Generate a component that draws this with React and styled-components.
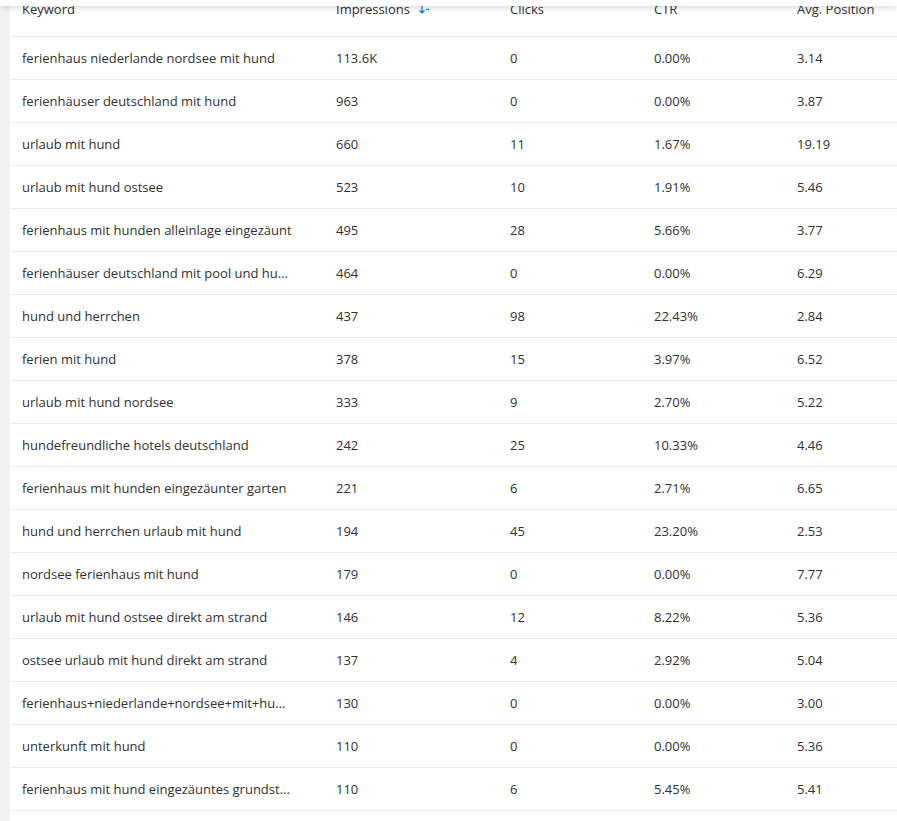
import React from 'react';
import styled, { createGlobalStyle } from 'styled-components';

const GlobalStyle = createGlobalStyle`
  html, body {
    margin: 0;
    padding: 0;
    background: #f3f2f1;
    overflow: hidden;
  }
  body {
    font-family: 'Open Sans', 'Noto Sans', sans-serif;
    color: #323130;
  }
`;

// keywords as the list shows them (long ones already cut by the table)
const rows = [
  ['ferienhaus niederlande nordsee mit hund', '113.6K', '0', '0.00%', '3.14'],
  ['ferienhäuser deutschland mit hund', '963', '0', '0.00%', '3.87'],
  ['urlaub mit hund', '660', '11', '1.67%', '19.19'],
  ['urlaub mit hund ostsee', '523', '10', '1.91%', '5.46'],
  ['ferienhaus mit hunden alleinlage eingezäunt', '495', '28', '5.66%', '3.77'],
  ['ferienhäuser deutschland mit pool und hu...', '464', '0', '0.00%', '6.29'],
  ['hund und herrchen', '437', '98', '22.43%', '2.84'],
  ['ferien mit hund', '378', '15', '3.97%', '6.52'],
  ['urlaub mit hund nordsee', '333', '9', '2.70%', '5.22'],
  ['hundefreundliche hotels deutschland', '242', '25', '10.33%', '4.46'],
  ['ferienhaus mit hunden eingezäunter garten', '221', '6', '2.71%', '6.65'],
  ['hund und herrchen urlaub mit hund', '194', '45', '23.20%', '2.53'],
  ['nordsee ferienhaus mit hund', '179', '0', '0.00%', '7.77'],
  ['urlaub mit hund ostsee direkt am strand', '146', '12', '8.22%', '5.36'],
  ['ostsee urlaub mit hund direkt am strand', '137', '4', '2.92%', '5.04'],
  ['ferienhaus+niederlande+nordsee+mit+hu...', '130', '0', '0.00%', '3.00'],
  ['unterkunft mit hund', '110', '0', '0.00%', '5.36'],
  ['ferienhaus mit hund eingezäuntes grundst...', '110', '6', '5.45%', '5.41'],
];

const TopBar = styled.div`
  position: fixed;
  top: 0;
  left: 0;
  right: 0;
  height: 6px;
  background: #ffffff;
  box-shadow: 0 1px 6px rgba(0, 0, 0, 0.18);
  z-index: 2;
`;

const Page = styled.div`
  padding-left: 10px;
  margin-top: -19px;
`;

const Card = styled.div`
  background: #ffffff;
  width: 887px;
  min-height: calc(100vh + 19px);
  overflow: hidden;
`;

const Grid = styled.div`
  display: grid;
  grid-template-columns: 314px 174px 144px 143px 1fr;
`;

const HeaderCell = styled.div`
  height: 55px;
  display: flex;
  align-items: center;
  padding-left: 12px;
  font-size: 13px;
  color: #323130;
  border-bottom: 1px solid #edebe9;
  white-space: nowrap;
`;

const Cell = styled.div`
  height: 42px;
  display: flex;
  align-items: center;
  padding-left: 12px;
  padding-right: ${(p) => (p.$wide ? '12px' : '8px')};
  font-size: 13px;
  color: #323130;
  border-bottom: 1px solid #edebe9;
  min-width: 0;
`;

const CellText = styled.span`
  white-space: nowrap;
  overflow: hidden;
  text-overflow: ellipsis;
`;

const SortIcon = styled.svg`
  margin-left: 8px;
  flex: none;
`;

const SortDown = () => (
  <SortIcon width="12" height="12" viewBox="0 0 12 12">
    <path d="M4 1v9M1.5 7.5 4 10l2.5-2.5" fill="none" stroke="#0078d4" strokeWidth="1.2" />
    <path d="M8 6.5h3" stroke="#0078d4" strokeWidth="1.2" />
  </SortIcon>
);

const headers = ['Keyword', 'Impressions', 'Clicks', 'CTR', 'Avg. Position'];

const App = () => (
  <>
    <GlobalStyle />
    <TopBar />
    <Page>
      <Card>
        <Grid>
          {headers.map((h, i) => (
            <HeaderCell key={h}>
              {h}
              {i === 1 && <SortDown />}
            </HeaderCell>
          ))}
          {rows.map((row, r) =>
            row.map((value, c) => (
              <Cell key={`${r}-${c}`} $wide={c === 0}>
                <CellText>{value}</CellText>
              </Cell>
            ))
          )}
        </Grid>
      </Card>
    </Page>
  </>
);

export default App;
